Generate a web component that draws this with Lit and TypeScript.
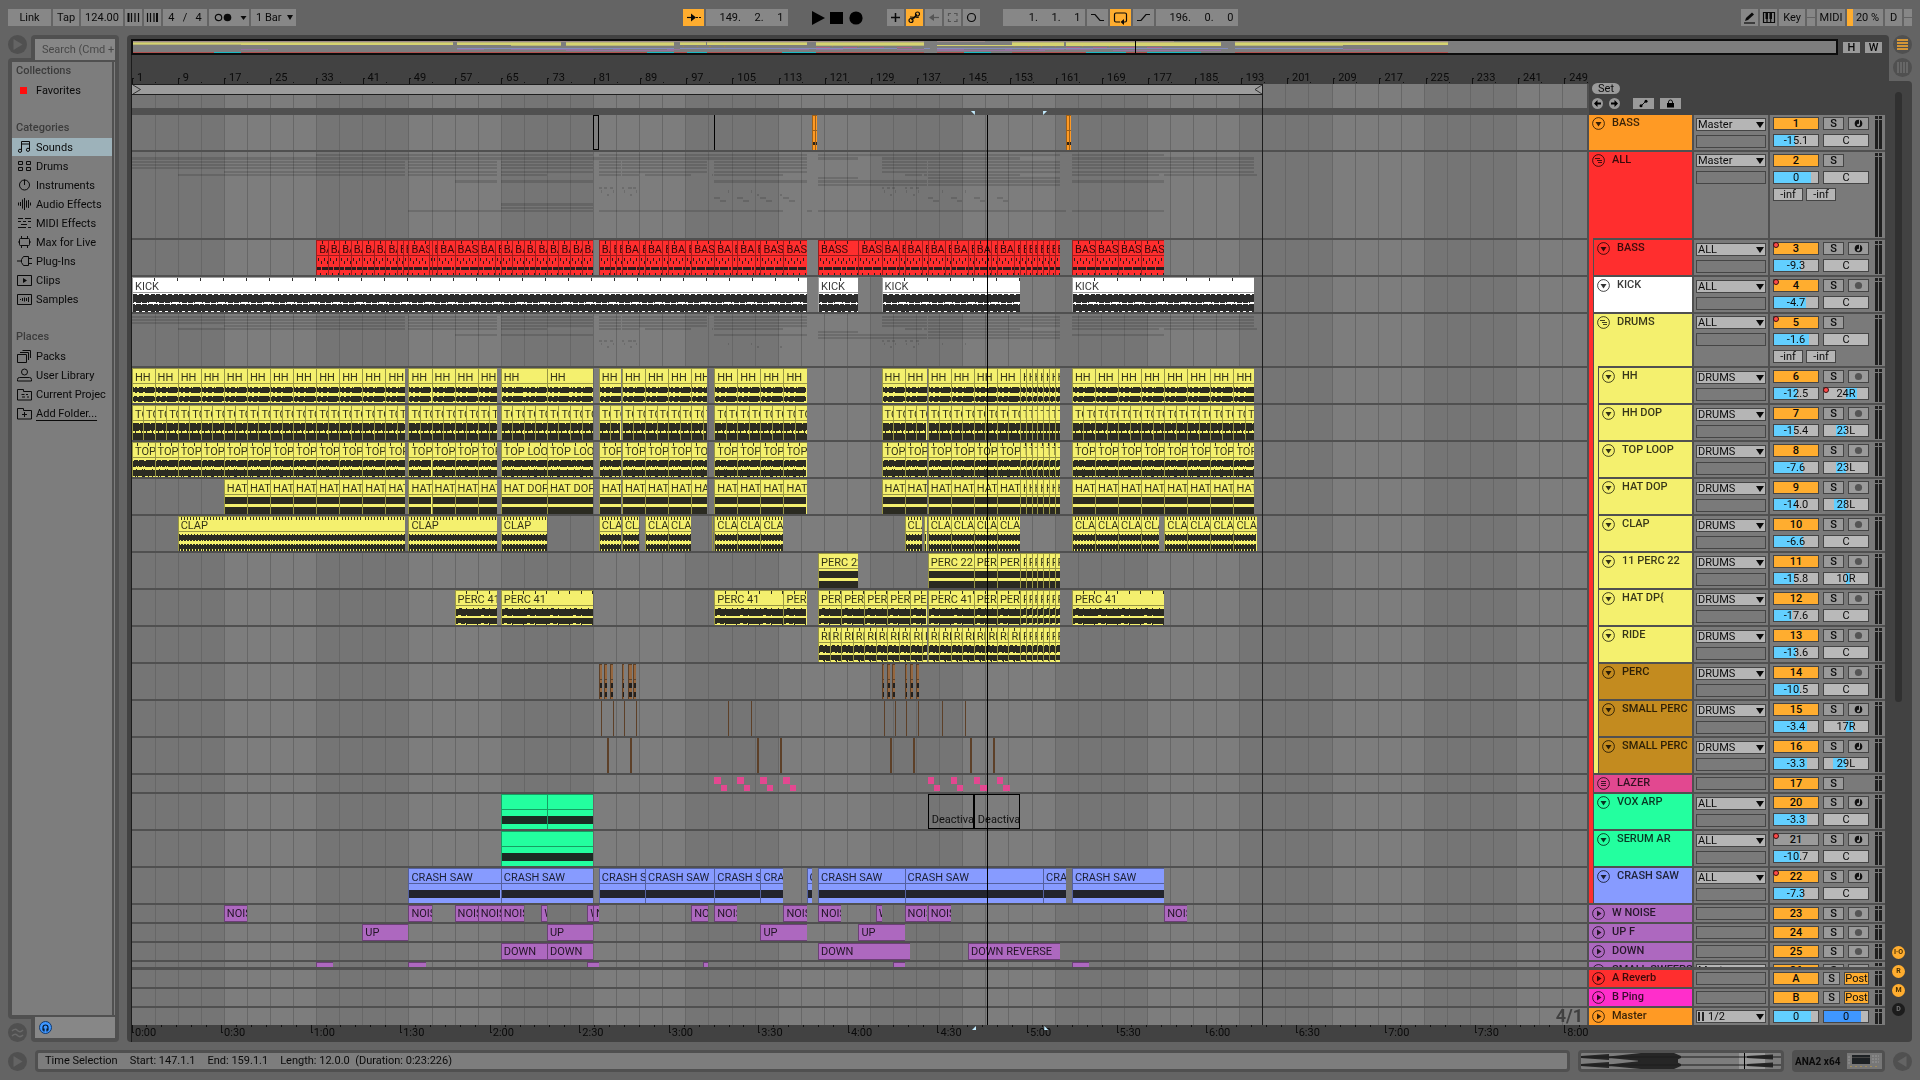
import { LitElement, html, svg, css, nothing } from "lit";
import { customElement, state } from "lit/decorators.js";

type Clip = [number, number, string?];
type Kind = "kick" | "hh" | "dense" | "top" | "hat" | "clap" | "perc" | "ride" | "bass" | "solid" | "brown" | "block" | "orange" | "line";

interface Track {
  name: string;
  num: string;
  color: string;
  clipColor?: string;
  size: "normal" | "slim" | "group" | "tall" | "cut";
  depth?: number;
  icon: "down" | "right" | "group" | "bars";
  out?: string;
  vol?: string;
  fill?: number;
  pan?: string;
  panFrom?: number;
  panTo?: number;
  solo?: boolean;
  arm?: "dot" | "note";
  sends?: boolean;
  off?: boolean;
  dot?: boolean;
  panDot?: boolean;
  send?: boolean;
  kind?: Kind;
  label?: string;
  clips?: Clip[];
  muted?: Clip[];
}

const BARS = 252.2;
const pct = (bars: number) => `${((bars / BARS) * 100).toFixed(4)}%`;
const at = (bar: number) => pct(Math.max(0, bar - 1.08));

/** Splits the span from..to into clips of the given length. */
const run = (from: number, to: number, step: number): Clip[] => {
  const out: Clip[] = [];
  for (let b = from; b < to - 0.05; b += step) out.push([b, Math.min(b + step, to)]);
  return out;
};
const cuts = (...points: number[]): Clip[] => points.slice(1).map((p, i) => [points[i], p] as Clip);

const RED = "#ff2e2e";
const YELLOW = "#f4f06e";
const BROWN = "#c38b1f";
const GREEN = "#23ff9f";
const PURPLE = "#ad68bf";

const loopClips = (start: number): Clip[] => [
  ...run(start, 48.4, 4), ...run(49, 64.4, 4), ...run(65, 81, 8), [82, 85.8], ...run(86, 100.8, 4),
  ...run(102, 118, 4), [131, 135], [135, 138.8], ...run(139, 155, 4), ...run(155, 162, 1), ...run(164, 195.6, 4),
];

const TRACKS: Track[] = [
  { name: "BASS", num: "1", color: "#ff9a24", size: "normal", icon: "down", out: "Master", vol: "-15.1", fill: 48, pan: "C", solo: true, arm: "note",
    kind: "orange", clips: [[119, 119.5], [119.5, 119.9], [163, 163.5], [163.5, 163.9]], muted: [[81, 82], [101.9, 102]] },
  { name: "ALL", num: "2", color: RED, size: "tall", icon: "group", out: "Master", vol: "0", fill: 83, pan: "C", solo: true, sends: true },
  { name: "BASS", num: "3", color: RED, size: "normal", depth: 1, icon: "down", out: "ALL", vol: "-9.3", fill: 62, pan: "C", solo: true, arm: "note", dot: true,
    kind: "bass", label: "BASS", clips: [
      ...cuts(33, 35, 37, 39, 41, 43, 45, 47, 48, 49, 52.5, 53, 54, 57, 61, 64, 65, 67, 69, 71, 73, 75, 77, 79, 81),
      ...cuts(82, 84, 85, 86, 89, 90, 93, 94, 97, 98, 102, 105, 106, 109, 110, 114, 118),
      ...cuts(120, 127, 131, 134, 135, 138, 139, 142, 143, 146, 147, 150, 151, 154, 155, 156, 157, 158, 159, 160, 161, 162),
      ...cuts(164, 168, 172, 176, 180)] },
  { name: "KICK", num: "4", color: "#ffffff", size: "normal", depth: 1, icon: "down", out: "ALL", vol: "-4.7", fill: 72, pan: "C", solo: true, arm: "dot", dot: true,
    kind: "kick", label: "KICK", clips: [[1, 118], [120, 127], [131, 155], [164, 195.6]] },
  { name: "DRUMS", num: "5", color: YELLOW, size: "group", depth: 1, icon: "group", out: "ALL", vol: "-1.6", fill: 80, pan: "C", solo: true, sends: true, dot: true },
  { name: "HH", num: "6", color: YELLOW, size: "normal", depth: 2, icon: "down", out: "DRUMS", vol: "-12.5", fill: 53, pan: "24R", panFrom: 50, panTo: 74, solo: true, arm: "dot", panDot: true,
    kind: "hh", label: "HH", clips: loopClips(1) },
  { name: "HH DOP", num: "7", color: YELLOW, size: "normal", depth: 2, icon: "down", out: "DRUMS", vol: "-15.4", fill: 45, pan: "23L", panFrom: 28, panTo: 50, solo: true, arm: "dot",
    kind: "dense", label: "TOP DOP", clips: [...run(1, 48.4, 2), ...run(49, 64.4, 2), ...run(65, 81, 2), [82, 84], [84, 85.8], ...run(86, 100.8, 2), ...run(102, 118, 2), ...run(131, 138.8, 2), ...run(139, 155, 2), ...run(155, 162, 1), ...run(164, 195.6, 2)] },
  { name: "TOP LOOP", num: "8", color: YELLOW, size: "normal", depth: 2, icon: "down", out: "DRUMS", vol: "-7.6", fill: 66, pan: "23L", panFrom: 28, panTo: 50, solo: true, arm: "dot",
    kind: "top", label: "TOP LOOP", clips: loopClips(1) },
  { name: "HAT DOP", num: "9", color: YELLOW, size: "normal", depth: 2, icon: "down", out: "DRUMS", vol: "-14.0", fill: 50, pan: "28L", panFrom: 23, panTo: 50, solo: true, arm: "dot",
    kind: "hat", label: "HAT DOP", clips: loopClips(17) },
  { name: "CLAP", num: "10", color: YELLOW, size: "normal", depth: 2, icon: "down", out: "DRUMS", vol: "-6.6", fill: 67, pan: "C", solo: true, arm: "dot",
    kind: "clap", label: "CLAP", clips: [[9, 48.4], [49, 64.4], [65, 73], [82, 85.8], [86, 89], [90, 94], [94, 98], [101.6, 101.8], [102, 106], [106, 110], [110, 114], [135, 138], [138.4, 138.8], ...run(139, 155, 4), [164, 168], [168, 172], [172, 176], [176, 179.1], ...run(180, 196, 4)] },
  { name: "11 PERC 22", num: "11", color: YELLOW, size: "normal", depth: 2, icon: "down", out: "DRUMS", vol: "-15.8", fill: 45, pan: "10R", panFrom: 50, panTo: 60, solo: true, arm: "dot",
    kind: "hat", label: "PERC 22", clips: [[120, 127], [139, 147], [147, 151], [151, 155], ...run(155, 162, 1)] },
  { name: "HAT DP{", num: "12", color: YELLOW, size: "normal", depth: 2, icon: "down", out: "DRUMS", vol: "-17.6", fill: 41, pan: "C", solo: true, arm: "dot",
    kind: "perc", label: "PERC 41", clips: [[57, 64.4], [65, 81], [102, 114], [114, 118], ...run(120, 138.8, 4), [139, 147], [147, 151], [151, 155], ...run(155, 162, 1), [164, 180]] },
  { name: "RIDE", num: "13", color: YELLOW, size: "normal", depth: 2, icon: "down", out: "DRUMS", vol: "-13.6", fill: 51, pan: "C", solo: true, arm: "dot",
    kind: "ride", label: "RIDE", clips: [...run(120, 138.8, 2), ...run(139, 155, 2), ...run(155, 162, 1)] },
  { name: "PERC", num: "14", color: BROWN, clipColor: "#96673f", size: "normal", depth: 2, icon: "down", out: "DRUMS", vol: "-10.5", fill: 58, pan: "C", solo: true, arm: "dot",
    kind: "brown", clips: [[82, 82.5], [82.9, 83.5], [83.9, 84.4], [86, 86.4], [87, 87.7], [87.9, 88.4], [131, 131.4], [131.9, 132.5], [132.9, 133.4], [135, 135.5], [135.9, 136.5], [136.9, 137.5]] },
  { name: "SMALL PERC", num: "15", color: BROWN, clipColor: "#966a48", size: "normal", depth: 2, icon: "down", out: "DRUMS", vol: "-3.4", fill: 76, pan: "17R", panFrom: 50, panTo: 67, solo: true, arm: "note",
    kind: "line", clips: [82.4, 84.4, 86.3, 88.4, 104.4, 108.3, 131.4, 133.4, 135.3, 137.4, 141.4, 145.4].map((b) => [b, b + 0.18] as Clip) },
  { name: "SMALL PERC", num: "16", color: BROWN, clipColor: "#966a48", size: "normal", depth: 2, icon: "down", out: "DRUMS", vol: "-3.3", fill: 76, pan: "29L", panFrom: 21, panTo: 50, solo: true, arm: "note",
    kind: "line", clips: [...[83.4, 87.4, 109.4, 113.4, 132.4, 136.4, 150.4].map((b) => [b, b + 0.35] as Clip), [146.4, 146.6]] },
  { name: "LAZER", num: "17", color: "#e24890", size: "slim", depth: 1, icon: "bars", solo: true,
    kind: "block", clips: [102, 106, 110, 114, 139, 143, 147, 151].map((b) => [b, b + 2.2] as Clip) },
  { name: "VOX ARP", num: "20", color: GREEN, size: "normal", depth: 1, icon: "down", out: "ALL", vol: "-3.3", fill: 76, pan: "C", solo: true, arm: "note",
    kind: "solid", clips: [[65, 73], [73, 81]], muted: [[139, 147, "Deactivated"], [147, 155, "Deactivated"]] },
  { name: "SERUM AR", num: "21", color: GREEN, size: "normal", depth: 1, icon: "down", out: "ALL", vol: "-10.7", fill: 58, pan: "C", solo: true, arm: "note", dot: true, off: true,
    kind: "solid", clips: [[65, 81]] },
  { name: "CRASH SAW", num: "22", color: "#879bff", size: "normal", depth: 1, icon: "down", out: "ALL", vol: "-7.3", fill: 65, pan: "C", solo: true, arm: "note", dot: true,
    kind: "solid", label: "CRASH SAW", clips: [[49, 65], [65, 81], [82, 90], [90, 102], [102, 110], [110, 114], [118, 118.9], [120, 135], [135, 159], [159, 163], [164, 180]] },
  { name: "W NOISE", num: "23", color: PURPLE, size: "slim", icon: "right", solo: true, arm: "dot",
    label: "NOISE", clips: [[17, 21], [49, 53], [57, 61], [61, 65], [65, 69], [72, 73, "W"], [80, 81, "W"], [81, 82], [98, 101], [102, 106], [114, 118], [120, 124], [130, 131, "W"], [135, 138.8], [139, 143], [180, 184]] },
  { name: "UP F", num: "24", color: PURPLE, size: "slim", icon: "right", solo: true, arm: "dot", label: "UP", clips: [[41, 49], [73, 81], [110, 118], [127, 135]] },
  { name: "DOWN", num: "25", color: PURPLE, size: "slim", icon: "right", solo: true, arm: "dot", label: "DOWN", clips: [[65, 73], [73, 81], [120, 136], [146, 162, "DOWN REVERSE"]] },
  { name: "SMALL SWEEPS", num: "26", color: PURPLE, size: "cut", icon: "right", out: "Master", solo: true, arm: "dot", clips: [[33, 36], [49, 52], [80, 82], [100, 100.9], [133, 135], [164, 167]] },
];

const RETURNS: Track[] = [
  { name: "A Reverb", num: "A", color: RED, size: "slim", icon: "right", solo: true, send: true },
  { name: "B Ping", num: "B", color: "#ff2ecb", size: "slim", icon: "right", solo: true, send: true },
];

/* Vertical slot of each child track inside the folded group overviews. */
const ALL_SLOTS: [number, number, number][] = [
  [2, 2, 2], [3, 5, 3], [5, 9, 2], [6, 12, 2], [7, 15, 2], [8, 19, 2], [9, 22, 2], [10, 25, 2], [11, 28, 3],
  [12, 32, 2], [13, 35, 2], [14, 38, 3], [15, 42, 2], [17, 51, 3], [18, 55, 2], [19, 58, 2],
];
const DRUM_SLOTS: [number, number, number][] = Array.from({ length: 11 }, (_, i) => [i + 5, 2 + i * 3, 2]);

const merge = (clips: Clip[]): Clip[] => {
  const out: Clip[] = [];
  for (const [s, e] of clips) {
    const last = out[out.length - 1];
    if (last && s - last[1] < 0.1) last[1] = e;
    else out.push([s, e]);
  }
  return out;
};

/** Deterministic waveform tile: one path of 1px columns. */
const tile = (kind: Kind): string => {
  let seed = kind.length * 977 + kind.charCodeAt(0) * 131;
  const rnd = (n: number) => ((seed = (seed * 1103515245 + 12345) & 0x7fffffff) >> 8) % n;
  const few = () => (rnd(4) ? 0 : 1);
  let d = "";
  const col = (x: number, y: number, h: number, w = 1) => (d += `M${x} ${y}h${w}v${h}h${-w}z`);
  const span = (x: number, a: number, b: number) => col(x, a, b - a);
  for (let x = 0; x < 23; x++) {
    const beat = x % 6 === 2;
    if (kind === "kick") {
      span(x, x % 6 < 4 ? 16 : 17, beat ? 24 : 25 - few());
      span(x, beat ? 27 : 26, x % 6 < 3 ? 34 : 33);
    } else if (kind === "hh") {
      span(x, 18 + few(), 24 - few());
      span(x, 27 + few(), 33 - few());
    } else if (kind === "dense") {
      span(x, 17 + few(), beat ? 26 : 25 - few());
      span(x, beat ? 26 : 27 + few() - few(), 34 - few());
    } else if (kind === "top") {
      span(x, 17 + few(), 24 - few());
      span(x, 27 - few(), 33 + few());
    } else if (kind === "hat") {
      span(x, 17, 24);
      span(x, 27, 34);
    } else if (kind === "clap") {
      span(x, x % 3 ? 18 : 17, x % 3 === 1 ? 23 : 24);
      span(x, x % 3 === 1 ? 28 : 27, x % 3 ? 32 : 34);
    } else if (kind === "perc" || kind === "ride") {
      span(x, 18 - few(), 25 - few());
      span(x, 27, 33 - few());
    } else if (kind === "bass") {
      if (x % 9 !== 4) col(x, 26, 3);
      if (x % 6 === 1) col(x, 17, 3);
      if (x % 6 === 4) col(x, 20, 3);
      if (x % 6 === 3) col(x, 32, 3, x % 4 ? 1 : 2);
    } else if (kind === "solid") {
      col(x, 21, 8);
    } else if (kind === "brown") {
      col(x, 18, 5);
      col(x, 27, 5);
    } else if (kind === "orange") {
      col(x, 26, 3);
    }
  }
  const ticks: Partial<Record<Kind, number[]>> = { kick: [21], top: [4, 15], perc: [10, 21], ride: [5, 16], bass: [5, 16] };
  for (const x of ticks[kind] ?? []) {
    col(x, 0, 3);
    if (kind !== "bass") col(x, 32, 3);
  }
  if (kind === "clap") for (let x = 2; x < 23; x += 3) { col(x, 0, 3); col(x, 32, 2); }
  return d;
};
const KINDS: Kind[] = ["kick", "hh", "dense", "top", "hat", "clap", "perc", "ride", "bass", "solid", "brown", "orange"];
const TILES = KINDS.map((k) => [k, tile(k)] as const);

const ICONS: Record<string, unknown> = {
  notes: svg`<path d="M4.500 10.500V1.500h8v8M4.500 4h8"/><circle cx="3" cy="10.800" r="1.600"/><circle cx="11" cy="9.800" r="1.600"/>`,
  pads: svg`<path d="M1.500 2.500h4v3h-4zM9.500 2.500h4v3h-4zM1.500 8.500h4v3h-4zM9.500 8.500h4v3h-4z"/>`,
  dial: svg`<circle cx="7.500" cy="7" r="5"/><path d="M7.500 1.500V7"/>`,
  wave: svg`<path d="M1.500 5.500v3M3.500 5v4M5.500 2.500v9M7.500 1v12M9.500 3.500v7M11.500 3v8M13.500 5.500v3"/>`,
  lines: svg`<path d="M1 2.500h5M8 2.500h6M1 5.500h3M6 5.500h3M11 5.500h3M4 8.500h6M1 11.500h8M11 11.500h3"/>`,
  max: svg`<rect x="2.500" y="3.500" width="10" height="7" rx="1"/><path d="M4.500 1v2.500M10.500 1v2.500M4.500 10.500V13M10.500 10.500V13M1 7h1.500M12.500 7H14"/>`,
  plug: svg`<path d="M0 7h4M11 4.500h4M11 9.500h4M4.500 5.500l2-3h5v9h-5l-2-3z"/>`,
  clip: svg`<path d="M.5 2.500h14v10H.5z"/><path d="M6 5l4 2.500L6 10z" fill="currentColor" stroke="none"/>`,
  sample: svg`<path d="M.5 2.500h14v10H.5zM3.500 7v1M5.500 6v3M7.500 5.500v4M9.500 6v3M11.500 5v5"/>`,
  packs: svg`<path d="M.5 5.500h9v8h-9zM3 3.500h8.500V11M5.500 1.500h8V9"/>`,
  user: svg`<circle cx="7.500" cy="4" r="3"/><path d="M.5 13V11.500q0-2 2-2h10q2 0 2 2V13z"/>`,
  project: svg`<path d="M.5 13V2.500h6v2h8V13zM4.500 7.500h3M9 7.500h2M5 10h3M10 10h2"/>`,
  add: svg`<path d="M.5 13V2.500h6v2h8V13zM7.500 6v5M5 8.500h5"/>`,
};

const icon = (body: unknown, cls = "ico", box = "0 0 15 14") => html`<svg class=${cls} viewBox=${box} aria-hidden="true">${body}</svg>`;

const roundPlay = () => html`<button class="round" aria-label="Toggle view">
  <svg viewBox="0 0 19 19"><path d="M5.500 4l9 5.500-9 5.500z" fill="#646464"/></svg></button>`;

const BROWSER: { title: string; items: [string, string][] }[] = [
  { title: "Collections", items: [["fav", "Favorites"]] },
  { title: "Categories", items: [["notes", "Sounds"], ["pads", "Drums"], ["dial", "Instruments"], ["wave", "Audio Effects"], ["lines", "MIDI Effects"], ["max", "Max for Live"], ["plug", "Plug-Ins"], ["clip", "Clips"], ["sample", "Samples"]] },
  { title: "Places", items: [["packs", "Packs"], ["user", "User Library"], ["project", "Current Projec"], ["add", "Add Folder..."]] },
];

@customElement("app-root")
export class AppRoot extends LitElement {
  @state() private selected = "Sounds";

  static styles = css`
    :host { display: block; min-height: 100vh; background: #646464; color: #0a0a0a; font: 11px/13px Roboto, "Liberation Sans", sans-serif; }
    * { box-sizing: border-box; }
    button, input, select { font: inherit; color: inherit; margin: 0; padding: 0; border: 0; border-radius: 0; background: none; outline-offset: -1px; }
    input { min-width: 0; }
    svg { display: block; }
    .app { display: flex; flex-direction: column; padding: 0 8px 8px; overflow: hidden; }

    .toolbar { display: grid; grid-template-columns: 1fr auto 1fr; padding: 9px 0; height: 35px; }
    .set { display: flex; gap: 2px; }
    .set.end { justify-content: flex-end; }
    .tb { height: 17px; background: #878787; display: flex; align-items: center; justify-content: center; text-align: center; line-height: 17px; white-space: pre; }
    .tb svg { height: 17px; width: 17px; flex: none; fill: none; stroke: currentColor; stroke-width: 1.2; }
    .tb svg.w40 { width: 40px; }
    .tb.on { background: #ffad2f; }
    .tb.dim { color: #555; }
    .w17 { width: 17px; } .w21 { width: 21px; } .w26 { width: 26px; } .w28 { width: 28px; } .w36 { width: 36px; }
    .w40 { width: 40px; } .w42 { width: 42px; } .w43 { width: 43px; } .w44 { width: 44px; } .w45 { width: 45px; } .w82 { width: 82px; }
    .w66 { width: 66px; }
    .pos { text-align: right; padding-right: 4px; }
    .transport { display: flex; width: 57px; margin: 0 19px; }
    .plain { flex: 1; height: 17px; display: flex; justify-content: center; align-items: center; }
    .plain svg { width: 14px; height: 14px; }
    .loop { display: flex; gap: 2px; margin-left: 21px; }
    .lamps { width: 8px; display: flex; flex-direction: column; gap: 1px; }
    .lamps i { flex: 1; background: #878787; }
    .cpu { background: linear-gradient(90deg, #ffad2f 6px, #878787 6px); padding-left: 5px; }
    .pick { position: relative; display: flex; }
    .pick select { appearance: none; width: 100%; }
    .pick::after { content: ""; position: absolute; right: 3px; top: 50%; margin-top: -3px; border: 3px solid transparent; border-top: 5px solid #0a0a0a; border-bottom: 0; pointer-events: none; }
    .tb select { height: 17px; padding-left: 5px; text-align: left; }

    .main { display: flex; align-items: stretch; }
    .round { width: 19px; height: 19px; border-radius: 50%; background: #505050; flex: none; display: block; }
    .round svg { width: 19px; height: 19px; }

    .browser { width: 111px; flex: none; display: flex; flex-direction: column; margin-right: 8px; }
    .bhead, .bfoot { display: flex; gap: 4px; height: 23px; }
    .bfoot { align-items: flex-end; }
    .tab { flex: 1; background: #505050; padding: 4px 4px 0; border-radius: 4px 4px 0 0; min-width: 0; height: 23px; }
    .bfoot .tab { border-radius: 0 0 4px 4px; padding: 0 4px 4px; display: flex; align-items: flex-end; }
    .search { width: 80px; height: 21px; background: #878787; padding-left: 7px; position: relative; }
    .search::placeholder { color: #484848; opacity: 1; }
    .preview { width: 80px; height: 21px; background: #878787; flex: none; padding-left: 4px; text-align: left; }
    .preview svg { width: 13px; height: 13px; }
    .list { flex: 1; background: #505050; border-radius: 4px 0 0 4px; padding: 4px; display: flex; gap: 2px; }
    .items { width: 100px; background: #7d7d7d; overflow: hidden; }
    .bar { flex: 1; background: #7d7d7d; }
    .items section { padding-bottom: 19px; }
    .items h2 { margin: 0; height: 19px; line-height: 18px; padding-left: 4px; font-size: 11px; font-weight: 500; color: #3c3c3c; }
    .item { display: flex; align-items: center; gap: 4px; width: 100px; height: 18px; margin-bottom: 1px; padding-left: 5px; white-space: nowrap; text-align: left; }
    .item.sel { background: #9db2ba; }
    .item.add span { text-decoration: underline; text-underline-offset: 3px; }
    .ico { width: 15px; height: 14px; fill: none; stroke: currentColor; flex: none; }
    .fav { width: 7px; height: 7px; background: #ff0d0d; margin: 0 5px 0 3px; }

    .panel { flex: 1; min-width: 0; background: #424242; border-radius: 4px 4px 0 4px; padding: 4px 4px 0 4px; }
    .top { display: flex; height: 16px; align-items: center; gap: 5px; padding-right: 3px; }
    .overview { flex: 1; height: 16px; border: 2px solid #0c0c0c; background: #7d7d7d; }
    .overview svg { width: 100%; height: 12px; }
    .hw { width: 17px; height: 11px; background: #9a9a9a; line-height: 11px; font-weight: 500; }
    .body { display: flex; }
    .timeline { flex: 1; min-width: 0; position: relative; border-right: 2px solid #505050; border-left: 1px solid #1c1c1c; }
    .ruler { height: 29px; position: relative; overflow: hidden; margin-right: -2px; background: #424242; }
    .ruler span { position: absolute; bottom: 0; height: 6px; border-left: 1px solid #111; }
    .ruler b { position: absolute; left: 4px; bottom: 0; font-weight: 400; }
    .ruler span::before { content: ""; position: absolute; left: 0; top: 0; width: 1px; height: 1px; background: #111; }
    .ruler i { position: absolute; bottom: 1px; width: 1px; height: 1px; background: #111; }
    .field { position: relative; background: #757575; }
    .shade, .rule, .mark { position: absolute; top: 0; bottom: 0; pointer-events: none; }
    .shade { background: #7d7d7d; }
    .rule { width: 1px; background: #676767; }
    .mark { width: 1px; background: #000; }
    .mark.end { background: #1c1c1c; }
    .mark.head { top: 31px; mix-blend-mode: darken; }
    .scrub { height: 31px; border-bottom: 7px solid #505050; position: relative; }
    .brace { position: relative; height: 11px; background: #9c9c9c; border: solid #1e1e1e; border-width: 1px 0; display: flex; justify-content: space-between; }
    .brace svg { width: 10px; height: 9px; fill: none; stroke: #333; }
    .flag { position: absolute; width: 4px; height: 4px; background: #c3ecff; }
    .flag.a { clip-path: polygon(0 0, 100% 0, 100% 100%); top: 27px; margin-left: -3px; }
    .flag.b { clip-path: polygon(0 0, 100% 0, 0 100%); top: 27px; }
    .clock .flag { width: 4px; height: 4px; top: 1px; background: #c3ecff; }
    .clock .c { clip-path: polygon(100% 0, 100% 100%, 0 100%); margin-left: -3px; }
    .clock .d { clip-path: polygon(0 0, 100% 100%, 0 100%); }

    .normal { height: 35px; } .slim { height: 17px; } .tall { height: 86px; } .group { height: 52px; } .cut { height: 5px; overflow: hidden; }
    .lane { position: relative; box-sizing: content-box; border-bottom: 2px solid #505050; }
    .lane.cut { border-bottom-width: 3px; }
    .lane.last { border-bottom: 0; }
    .clip { position: absolute; top: 0; height: 100%; overflow: hidden; background: var(--c); border-left: 1px solid var(--d); border-top: 1px solid var(--d); white-space: nowrap; color: rgba(0, 0, 0, 0.8); }
    .clip .t { height: 15px; border-bottom: 1px solid var(--d); padding-left: 2px; line-height: 17px; }
    .clip.s .t { height: 16px; line-height: 16px; }
    .clip svg { position: absolute; left: 0; top: 0; width: 100%; height: 34px; }
    .clip.line { border-color: #5d4028; }
    .clip.muted { background: none; border: 1px solid #000; color: #111; }
    .clip.muted.thin { border-width: 0 0 0 1px; }
    .clip.muted.thin .t { border: 0; }
    .clip.muted .t { border-color: #000; height: 17px; }
    .clip.muted p { margin: 0; line-height: 16px; padding-left: 3px; }
    .block { position: absolute; top: 2px; height: 15px; display: grid; grid-template: 7px 6px / 1fr 1fr; row-gap: 1px; }
    .block i { background: #e24890; }
    .block i + i { grid-area: 2 / 2; }
    .ghost { position: absolute; background: rgba(0, 0, 0, 0.13); }
    .spark { position: absolute; top: 18px; height: 16px; width: 1px; background: linear-gradient(#fff 7px, transparent 7px 9px, #fff 9px); }
    .grid-note { position: absolute; right: 4px; bottom: 0; font-size: 18px; line-height: 18px; font-weight: 700; color: #404040; }
    .clock { height: 17px; position: relative; background: #424242; margin-right: -2px; overflow: hidden; }
    .clock span { position: absolute; top: 0; height: 8px; border-left: 1px solid #111; }
    .clock span::after { content: ""; position: absolute; left: 0; bottom: 0; width: 1px; height: 1px; background: #111; }
    .clock b { position: absolute; left: 2px; top: 1px; font-weight: 400; }
    .clock i { position: absolute; top: 0; width: 1px; height: 2px; background: #111; }

    .heads { width: 296px; flex: none; }
    .tools { height: 60px; padding: 28px 0 0 3px; display: flex; flex-direction: column; gap: 4px; align-items: flex-start; }
    .tools div { display: flex; gap: 6px; }
    .pill { width: 28px; height: 11px; border-radius: 6px; background: #9a9a9a; line-height: 11px; }
    .nav { width: 11px; height: 11px; border-radius: 50%; background: #9a9a9a; }
    .sq { width: 21px; height: 11px; background: #9a9a9a; }
    .sq.first { margin-left: 7px; }
    .nav svg { width: 11px; height: 11px; } .sq svg { width: 21px; height: 11px; }
    .rows { background: #505050; display: flex; flex-direction: column; gap: 2px; }
    .rows.returns { border-top: 3px solid #505050; }
    .row { display: flex; gap: 2px; }
    .name { width: 103px; display: flex; }
    .strip { width: 4px; margin: -2px 1px 0 0; flex: none; }
    .title { flex: 1; min-width: 0; display: flex; gap: 7px; padding: 2px 0 0 3px; overflow: hidden; white-space: nowrap; font-weight: 500; line-height: 12px; color: rgba(0, 0, 0, 0.78); }
    .fold { width: 13px; height: 13px; flex: none; }
    .fold svg { width: 13px; height: 13px; fill: none; stroke: rgba(0, 0, 0, 0.72); }
    .io { width: 74px; background: #7a7a7a; padding: 2px 2px 0; display: flex; flex-direction: column; gap: 4px; overflow: hidden; }
    .normal .io { padding-top: 3px; }
    .box { height: 13px; border: 1px solid #454545; flex: none; }
    .io .pick { height: 13px; border: 1px solid #454545; background: #b5b5b5; flex: none; align-items: center; }
    .io select { height: 11px; line-height: 11px; padding-left: 1px; }
    .io .pick::after { border-width: 4px; border-top-width: 6px; right: 1px; border-bottom: 0; }
    .io .meters { width: 8px; height: 9px; flex: none; background: linear-gradient(90deg, transparent 1px, #222 1px 3px, transparent 3px 5px, #222 5px 7px, transparent 7px); }
    .io .meters + select { padding-left: 3px; }
    .mix { width: 115px; background: #7a7a7a; display: flex; padding: 2px 3px 0 3px; gap: 6px; overflow: hidden; }
    .ctl { display: grid; grid-template-columns: repeat(2, 46px); gap: 4px; align-content: start; grid-auto-rows: 13px; }
    .ctl > *, .duo > *, .tri > * { border: 1px solid #454545; text-align: center; line-height: 11px; height: 13px; }
    .ctl > .duo, .ctl > .tri, .ctl > .wrap { border: 0; }
    .wrap { position: relative; width: 46px; }
    .wrap > button, .wrap > input { width: 46px; height: 13px; border: 1px solid #454545; display: block; text-align: center; line-height: 11px; }
    .wrap i { position: absolute; left: 0; top: 0; width: 6px; height: 6px; border-radius: 50%; background: #ff4a4a; border: 1px solid #3a1010; }
    .act { background: #ffad2f; font-weight: 500; }
    .act.off { background: #9a9a9a; }
    .duo { display: flex; gap: 4px; }
    .duo > * { width: 21px; background: #9a9a9a; font-weight: 500; }
    .duo.snd > :first-child { width: 17px; }
    .duo.snd > :last-child { width: 25px; background: #ffad2f; font-weight: 400; }
    .duo svg { width: 19px; height: 11px; }
    .tri { display: flex; gap: 3px; }
    .tri > * { width: 30px; background: #b5b5b5; flex: none; }
    .val { background: linear-gradient(90deg, #b9b9b9 var(--a), var(--k, #62cfff) var(--a) var(--b), #b9b9b9 var(--b)); }
    .meter { width: 7px; margin-top: -1px; margin-bottom: 1px; align-self: stretch; background: linear-gradient(#7a7a7a, #7a7a7a) 0 3px / 100% 1px no-repeat, linear-gradient(90deg, #1f1f1f 3px, transparent 3px 4px, #1f1f1f 4px); }

    .side { width: 23px; flex: none; display: flex; flex-direction: column; }
    .views { display: flex; flex-direction: column; gap: 4px; padding-left: 4px; height: 46px; }
    .rail { flex: 1; background: #424242; border-radius: 0 4px 4px 0; padding: 11px 0 26px 3px; display: flex; flex-direction: column; justify-content: space-between; }
    .thumb { width: 7px; height: 66%; border-radius: 4px; background: #303030; margin-left: 3px; }
    .toggles { display: flex; flex-direction: column; gap: 6px; }
    .dotbtn { width: 13px; height: 13px; border-radius: 50%; background: #ffad2f; font-size: 7px; font-weight: 700; line-height: 13px; color: #4a3000; }
    .dotbtn.dark { background: #1c1c1c; color: #777; }

    .status { display: flex; gap: 8px; margin-top: 8px; height: 22px; align-items: center; }
    .info { flex: 1; min-width: 0; height: 22px; border: 3px solid #505050; border-radius: 4px; background: #7d7d7d; display: flex; gap: 12px; padding-left: 7px; line-height: 16px; white-space: pre; }
    .mini { width: 206px; height: 22px; border: 3px solid #505050; border-radius: 4px; background: #7d7d7d; }
    .mini svg { width: 200px; height: 16px; }
    .device { width: 93px; height: 22px; border-radius: 4px; background: #505050; display: flex; align-items: center; justify-content: space-between; padding: 0 3px; font-size: 10px; font-weight: 700; white-space: nowrap; }
    .device svg { width: 35px; height: 16px; flex: none; }
  `;

  private toolbar() {
    const b = (w: string, body: unknown, label = "", cls = "") => html`<button class="tb ${w} ${cls}" aria-label=${label || nothing}>${body}</button>`;
    const g = (body: unknown) => html`<svg viewBox="0 0 17 17">${body}</svg>`;
    return html`<header class="toolbar">
      <div class="set">
        ${b("w43", "Link")}${b("w26", "Tap")}
        <input class="tb w42" aria-label="Tempo" value="124.00">
        ${b("w17", g(svg`<path d="M3.500 4v9" stroke-width="2"/><path d="M6.500 4v9M10 4v9M13.500 4v9"/>`), "Nudge down")}
        ${b("w17", g(svg`<path d="M13 4v9" stroke-width="2"/><path d="M3.500 4v9M6.500 4v9M10 4v9"/>`), "Nudge up")}
        <input class="tb w44" aria-label="Time signature" value="4   /   4">
        <button class="tb w40" aria-label="Metronome"><svg class="w40" viewBox="0 0 40 17"><circle cx="9.500" cy="8.500" r="3.200"/><circle cx="18.500" cy="8.500" r="3.800" fill="currentColor" stroke="none"/><path d="M31.500 7h6l-3 4z" fill="currentColor" stroke="none"/></svg></button>
        <label class="tb pick w45"><select aria-label="Quantization"><option>1 Bar</option></select></label>
      </div>
      <div class="set">
        ${b("w21", g(svg`<path d="M2 8.500h8"/><path d="M6 4.500l5 4-5 4z" fill="currentColor" stroke="none"/><path d="M11 8.500h5" stroke-dasharray="2 1"/>`), "Follow", "on")}
        <input class="tb w82 pos" aria-label="Position" value="149.     2.     1">
        <div class="transport">
          <button class="plain" aria-label="Play"><svg viewBox="0 0 14 14"><path d="M1 0l13 7-13 7z"/></svg></button>
          <button class="plain" aria-label="Stop"><svg viewBox="0 0 14 14"><path d="M0 1h13v12H0z"/></svg></button>
          <button class="plain" aria-label="Record"><svg viewBox="0 0 14 14"><circle cx="7" cy="7" r="6.600"/></svg></button>
        </div>
        ${b("w17", g(svg`<path d="M8.500 4v9M4 8.500h9" stroke-width="1.500"/>`), "Overdub")}
        ${b("w17", g(svg`<path d="M5.500 11L11 5.500M4 8q4 0 5 1M9 7q1 2 4 1"/><circle cx="5" cy="11.500" r="2"/><circle cx="11.500" cy="5" r="2"/>`), "Automation arm", "on")}
        ${b("w17", g(svg`<path d="M14 8.500H6"/><path d="M9 5L4 8.500 9 12z" fill="currentColor" stroke="none"/>`), "Re-enable automation", "dim")}
        ${b("w17", g(svg`<path d="M4.500 7V4.500H7M10 4.500h3V7M13 10v2.500h-3M7 12.500H4.500V10"/>`), "Capture", "dim")}
        ${b("w17", g(svg`<circle cx="8.500" cy="8.500" r="4"/>`), "Session record")}
        <div class="loop">
          <input class="tb w82 pos" aria-label="Loop start" value="1.     1.     1">
          ${b("w21", g(svg`<path d="M2 5.500h4l5 6h4"/>`), "Punch in")}
          ${b("w21", g(svg`<path d="M8 13H4q-1.500 0-1.500-1.500v-6Q2.500 4 4 4h9q1.500 0 1.500 1.500v6Q14.500 13 13 13h-2"/><path d="M12 10l-3.500 3L12 16z" fill="currentColor" stroke="none"/>`), "Loop", "on")}
          ${b("w21", g(svg`<path d="M2 11.500h4l5-6h4"/>`), "Punch out")}
          <input class="tb w82 pos" aria-label="Loop length" value="196.     0.     0">
        </div>
      </div>
      <div class="set end">
        ${b("w17", g(svg`<path d="M3 14h11" /><path d="M4 12l1-3 6-5.500 2 2L7 11z" fill="currentColor" stroke="none"/>`), "Draw mode")}
        ${b("w17", g(svg`<path d="M3.500 3.500h11v10h-11zM7 9v4M10.700 9v4"/><path d="M5.500 3.500h2.500V10H5.500zM9.500 3.500H12V10H9.500z" fill="currentColor" stroke="none"/>`), "Computer MIDI keyboard")}
        ${b("w26", "Key")}
        <span class="lamps"><i></i><i></i></span>
        ${b("w28", "MIDI")}
        <span class="tb w36 cpu">20 %</span>
        ${b("w17", "D")}
        <span class="lamps"><i></i><i></i></span>
      </div>
    </header>`;
  }

  private browser() {
    return html`<nav class="browser" aria-label="Browser">
      <div class="bhead">${roundPlay()}<div class="tab"><input class="search" aria-label="Search" placeholder="Search (Cmd + F)"></div></div>
      <div class="list">
        <div class="items">${BROWSER.map((s) => html`<section><h2>${s.title}</h2>
          ${s.items.map(([ic, label]) => html`<button class="item ${label === this.selected ? "sel" : ""} ${ic === "add" ? "add" : ""}" @click=${() => (this.selected = label)}>
            ${ic === "fav" ? html`<i class="fav"></i>` : icon(ICONS[ic])}<span>${label}</span></button>`)}
        </section>`)}</div>
        <div class="bar"></div>
      </div>
      <div class="bfoot">
        <button class="round" aria-label="Groove pool"><svg viewBox="0 0 19 19" fill="none" stroke="#6a6a6a" stroke-width="1.500"><path d="M4 8q3-3 5.500-.5T15 7M4 13q3-3 5.500-.5T15 12"/></svg></button>
        <div class="tab"><button class="preview" aria-label="Preview"><svg viewBox="0 0 13 13"><circle cx="6.500" cy="6.500" r="6" fill="#3f97ff" stroke="#123a70"/><path d="M4 9.500V6.500a2.500 2.500 0 015 0v3M5 7.500v3M8 7.500v3" fill="none" stroke="#06182f" stroke-width="1.200"/></svg></button></div>
      </div>
    </nav>`;
  }

  private overview() {
    const rows: [number, number, number][] = [[3, 0, 1], [5, 1, 2], [7, 2, 2], [8, 3, 1], [11, 4, 1], [12, 4, 1], [14, 5, 1], [16, 6, 1], [19, 7, 1], [20, 8, 1], [22, 9, 1]];
    return html`<div class="overview"><svg viewBox="0 0 252 12" preserveAspectRatio="none" shape-rendering="crispEdges">
      ${rows.map(([i, y, h]) => merge(TRACKS[i].clips ?? []).map(([s, e]) => svg`<rect x=${s - 1} y=${y} width=${e - s} height=${h} fill=${i === 3 ? "#c09a9a" : TRACKS[i].color} opacity=".5"/>`))}
      ${merge(TRACKS[3].clips ?? []).map(([s, e]) => svg`<rect x=${s - 1} y="11" width=${e - s} height="1" fill="#b0504e"/>`)}
      ${[[12, 16], [76, 80], [82, 85], [96, 101], [123, 127], [141, 147], [150, 158]].map(([s, e]) => svg`<rect x=${s} y="11" width=${e - s} height="1" fill="#19b9c4"/>`)}
      <rect x="148.300" y="0" width=".15" height="12" fill="#000"/>
    </svg></div>`;
  }

  private clip(t: Track, [s, e, text]: Clip) {
    const c = t.clipColor ?? t.color;
    const style = `left:${at(s)};width:${pct(e - s)};--c:${c};--d:color-mix(in srgb, ${c} 62%, #000)`;
    if (t.kind === "block") return html`<div class="block" style="left:${at(s)};width:${pct(e - s)}"><i></i><i></i></div>`;
    if (t.kind === "line") return html`<div class="clip line" style="${style};background:#5d4028"></div>`;
    return html`<div class="clip ${t.kind ? "" : "s"}" style=${style}><div class="t">${text ?? t.label ?? ""}</div>
      ${t.kind ? html`<svg shape-rendering="crispEdges"><rect width="100%" height="34" fill="url(#w-${t.kind})"></rect></svg>` : nothing}</div>`;
  }

  private lane(t: Track, last = false) {
    const slots = t.size === "tall" ? ALL_SLOTS : t.size === "group" ? DRUM_SLOTS : [];
    const wavy = t.kind && t.kind !== "bass" && t.size === "normal" && (t.clips ?? []).some(([s, e]) => s <= 149 && e >= 149.3);
    return html`<div class="lane ${t.size} ${last ? "last" : ""}">
      ${slots.map(([i, y, h]) => merge(TRACKS[i].clips ?? []).map(([s, e]) => html`<i class="ghost" style="left:${at(s)};width:${pct(e - s)};top:${y}px;height:${h}px"></i>`))}
      ${t.size === "tall" ? TRACKS[16].clips!.map(([s]) => html`<i class="ghost" style="left:${at(s)};width:${pct(1)};top:45px;height:2px"></i><i class="ghost" style="left:${at(s + 1)};width:${pct(1)};top:48px;height:2px"></i>`) : nothing}
      ${(t.clips ?? []).map((c) => this.clip(t, c))}
      ${(t.muted ?? []).map(([s, e, text]) => html`<div class="clip muted ${e - s < 0.5 ? "thin" : ""}" style="left:${at(s)};width:${pct(e - s)}"><div class="t"></div><p>${text ?? ""}</p></div>`)}
      ${wavy ? html`<i class="spark" style="left:${at(149.27)}"></i>` : nothing}
    </div>`;
  }

  private timeline() {
    const eights = Array.from({ length: 32 }, (_, i) => 1 + i * 8);
    const master: Track = { name: "", num: "", color: "", size: "slim", icon: "right" };
    const secs = Array.from({ length: 98 }, (_, i) => i);
    const bar = (sec: number) => 1 + (sec * 124) / 240;
    return html`<div class="timeline">
      <div class="ruler">${eights.map((b) => html`<span style="left:${at(b)}"><b>${b}</b></span><i style="left:${at(b + 4)}"></i>`)}</div>
      <div class="field">
        ${[17, 49, 81, 113, 145, 177, 209, 241].map((b) => html`<i class="shade" style="left:${at(b)};width:${pct(Math.min(16, 253.2 - b))}"></i>`)}
        ${Array.from({ length: 62 }, (_, i) => html`<i class="rule" style="left:${at(5 + i * 4)}"></i>`)}
        <div class="scrub">
          <div class="brace" style="width:${pct(196)}">
            <svg viewBox="0 0 10 9"><path d="M1 0l7.500 4.500L1 9"/></svg><svg viewBox="0 0 10 9"><path d="M9 0L2 4.500 9 9"/></svg>
          </div>
          <i class="flag a" style="left:${at(147)}"></i><i class="flag b" style="left:${at(159)}"></i>
        </div>
        ${TRACKS.map((t) => this.lane(t))}
        ${RETURNS.map((t) => this.lane(t))}
        ${this.lane(master, true)}
        <i class="mark end" style="left:${at(197)}"></i>
        <i class="mark head" style="left:${at(149.27)}"></i>
        <span class="grid-note">4/1</span>
      </div>
      <div class="clock">
        ${secs.map((i) => (i % 6 ? html`<i style="left:${at(bar(i * 5))}"></i>` : html`<span style="left:${at(bar(i * 5))}"><b>${Math.floor(i / 12)}:${i % 12 ? "30" : "00"}</b></span>`))}
        <i class="flag c" style="left:${at(147)}"></i><i class="flag d" style="left:${at(159)}"></i>
      </div>
    </div>`;
  }

  private fold(t: Track) {
    const body = {
      down: svg`<path d="M3.500 5h6l-3 4.500z" fill="rgba(0,0,0,.8)" stroke="none"/>`,
      right: svg`<path d="M5 3.500v6l4.500-3z" fill="rgba(0,0,0,.8)" stroke="none"/>`,
      group: svg`<path d="M3 4.500h5M5 6.500h5M6 8.500h4"/>`,
      bars: svg`<path d="M4 4.500h5M4 6.500h5M4 8.500h5"/>`,
    }[t.icon];
    return html`<button class="fold" aria-label="Unfold ${t.name}"><svg viewBox="0 0 13 13"><circle cx="6.500" cy="6.500" r="5.900"/>${body}</svg></button>`;
  }

  private name(t: Track) {
    return html`<div class="name">
      ${t.depth ? html`<i class="strip" style="background:${RED}"></i>` : nothing}
      ${t.depth === 2 ? html`<i class="strip" style="background:${YELLOW}"></i>` : nothing}
      <div class="title" style="background:${t.color}">${this.fold(t)}<span>${t.name}</span></div>
    </div>`;
  }

  private arm(kind: "dot" | "note") {
    return html`<button aria-label="Arm"><svg viewBox="0 0 19 11">${kind === "dot"
      ? svg`<circle cx="9.500" cy="5.500" r="3.600" fill="#555"/>`
      : svg`<circle cx="9.500" cy="5.500" r="3.800" fill="#111"/><path d="M10.500 2v5" stroke="#9a9a9a"/><circle cx="9.300" cy="7" r="1.300" fill="#9a9a9a"/>`}</svg></button>`;
  }

  private row(t: Track) {
    return html`<div class="row ${t.size}">
      ${this.name(t)}
      <div class="io">
        ${t.out ? html`<label class="pick"><select aria-label="${t.name} output"><option>${t.out}</option></select></label>` : html`<div class="box"></div>`}
        ${t.out && t.size !== "cut" ? html`<div class="box"></div>` : nothing}
      </div>
      <div class="mix"><div class="ctl">
        <div class="wrap"><button class="act ${t.off ? "off" : ""}" aria-label="Track ${t.num} activator">${t.num}</button>${t.dot ? html`<i></i>` : nothing}</div>
        <div class="duo ${t.send ? "snd" : ""}"><button aria-label="Solo">S</button>${t.arm ? this.arm(t.arm) : nothing}${t.send ? html`<button>Post</button>` : nothing}</div>
        ${t.vol ? html`
          <input class="val" aria-label="${t.name} volume" .value=${t.vol} style="--a:0%;--b:${t.fill}%">
          <div class="wrap"><input class="val" aria-label="${t.name} pan" .value=${t.pan ?? ""} style="--a:${t.panFrom ?? 0}%;--b:${t.panTo ?? 0}%">${t.panDot ? html`<i></i>` : nothing}</div>` : nothing}
        ${t.sends ? html`<div class="tri"><span>-inf</span><span>-inf</span></div>` : nothing}
      </div><i class="meter"></i></div>
    </div>`;
  }

  private heads() {
    const master: Track = { name: "Master", num: "M", color: "#ff9a24", size: "slim", icon: "right" };
    return html`<div class="heads">
      <div class="tools">
        <button class="pill">Set</button>
        <div>
          <button class="nav" aria-label="Previous locator"><svg viewBox="0 0 11 11"><path d="M5.500 2L2 5.500 5.500 9V6.500H9v-2H5.500z"/></svg></button>
          <button class="nav" aria-label="Next locator"><svg viewBox="0 0 11 11"><path d="M5.500 2L9 5.500 5.500 9V6.500H2v-2h3.500z"/></svg></button>
          <button class="sq first" aria-label="Automation mode"><svg viewBox="0 0 21 11"><path d="M8 8l5-5" stroke="#111"/><circle cx="8" cy="7.800" r="1.500"/><circle cx="13" cy="3.200" r="1.500"/></svg></button>
          <button class="sq" aria-label="Lock envelopes"><svg viewBox="0 0 21 11"><path d="M7 5h7v4.500H7z"/><path d="M8.500 5V4a2 2 0 014 0v1" fill="none" stroke="#111"/></svg></button>
        </div>
      </div>
      <div class="rows">${TRACKS.map((t) => this.row(t))}</div>
      <div class="rows returns">${RETURNS.map((t) => this.row(t))}
        <div class="row slim">${this.name(master)}
          <div class="io"><label class="pick"><i class="meters"></i><select aria-label="Master output"><option>1/2</option></select></label></div>
          <div class="mix"><div class="ctl">
            <input class="val" aria-label="Master volume" value="0" style="--a:0%;--b:83%">
            <input class="val" aria-label="Cue volume" value="0" style="--a:0%;--b:83%;--k:#3f97ff">
          </div><i class="meter"></i></div>
        </div>
      </div>
    </div>`;
  }

  private side() {
    return html`<aside class="side">
      <div class="views">
        <button class="round" aria-label="Arrangement view"><svg viewBox="0 0 19 19"><path d="M4 5h11M4 8h11M4 11h11M4 14h11" stroke="#ffad2f" stroke-width="1.500"/></svg></button>
        <button class="round" aria-label="Session view"><svg viewBox="0 0 19 19"><path d="M5 4v11M8 4v11M11 4v11M14 4v11" stroke="#777" stroke-width="1.200"/></svg></button>
      </div>
      <div class="rail"><div class="thumb"></div>
        <div class="toggles"><button class="dotbtn">I·O</button><button class="dotbtn">R</button><button class="dotbtn">M</button><button class="dotbtn dark">D</button></div>
      </div>
    </aside>`;
  }

  private status() {
    const lobe = (y: number) => svg`<path d="M0 ${y - 1}L28 ${y - 3}V${y + 3}L0 ${y + 1}zM28 ${y - 0.5}L60 ${y - 4}H93L100 ${y - 1}V${y + 1}L93 ${y + 4}H60L28 ${y + 1}zM166 ${y - 1}L192 ${y - 2.5}V${y + 2.5}L166 ${y + 1}z"/><path d="M0 ${y}h200" stroke="#1c1c1c"/>`;
    return html`<footer class="status">${roundPlay()}
      <div class="info"><span>Time Selection</span><span>Start: 147.1.1</span><span>End: 159.1.1</span><span>Length: 12.0.0  (Duration: 0:23:226)</span></div>
      <div class="mini"><svg viewBox="0 0 200 16" fill="#262626"><path d="M158 0h26v16h-26z" fill="#999"/><path d="M63 1h28l6 4v6l-6 4H63l-6-4V5z"/>${lobe(4)}${lobe(12)}<path d="M163.500 0v16" stroke="#000"/></svg></div>
      <div class="device"><span>ANA2 x64</span><svg viewBox="0 0 35 16"><path d="M0 0h35v16H0z" fill="#777"/><path d="M5 2h18v9H5z" fill="#1d2124"/><path d="M5 4.500h18" stroke="#444"/><path d="M25 3h7M25 6h7M25 9h7M2 3v9" stroke="#999" stroke-dasharray="2 1"/><path d="M3 13.500h28" stroke="#a08c5a" stroke-dasharray="2 3"/></svg></div>
      <button class="round" aria-label="Hide detail"><svg viewBox="0 0 19 19"><path d="M13.500 4l-9 5.500 9 5.500z" fill="#646464"/></svg></button>
    </footer>`;
  }

  render() {
    return html`
      <svg width="0" height="0" style="position:absolute" aria-hidden="true"><defs>
        ${TILES.map(([k, d]) => svg`<pattern id="w-${k}" patternUnits="userSpaceOnUse" width="23" height="35"><path d=${d} fill="#1a1a1a" fill-opacity=".92"/></pattern>`)}
      </defs></svg>
      <div class="app">
        ${this.toolbar()}
        <div class="main">
          ${this.browser()}
          <main class="panel">
            <div class="top">${this.overview()}<button class="hw">H</button><button class="hw">W</button></div>
            <div class="body">${this.timeline()}${this.heads()}</div>
          </main>
          ${this.side()}
        </div>
        ${this.status()}
      </div>`;
  }
}
